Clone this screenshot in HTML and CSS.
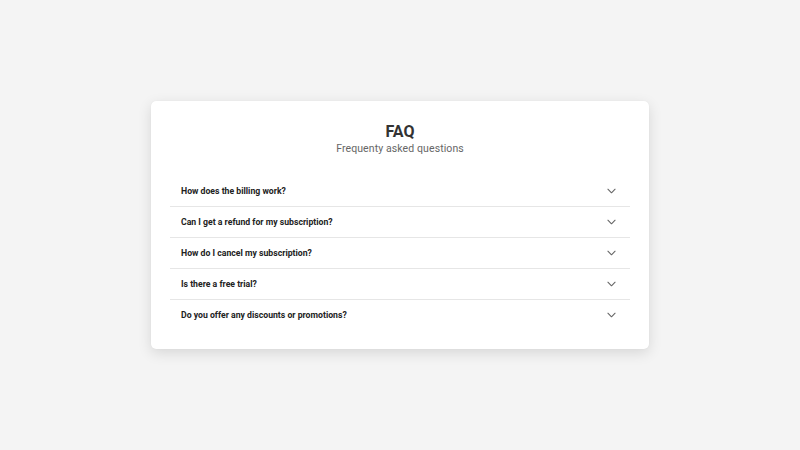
FILE: index.html
```
<!DOCTYPE html>
<html>
<head>
<meta charset="utf-8">
<link rel="stylesheet" href="styles.css">
</head>
<body>
<div class="page">
  <div class="card">
    <h1 class="title">FAQ</h1>
    <p class="subtitle">Frequenty asked questions</p>
    <ul class="faq">
      <li class="item"><span class="q">How does the billing work?</span><svg class="chev" viewBox="0 0 10 6" width="9" height="6"><path d="M1 1l4 4 4-4"/></svg></li>
      <li class="item"><span class="q">Can I get a refund for my subscription?</span><svg class="chev" viewBox="0 0 10 6" width="9" height="6"><path d="M1 1l4 4 4-4"/></svg></li>
      <li class="item"><span class="q">How do I cancel my subscription?</span><svg class="chev" viewBox="0 0 10 6" width="9" height="6"><path d="M1 1l4 4 4-4"/></svg></li>
      <li class="item"><span class="q">Is there a free trial?</span><svg class="chev" viewBox="0 0 10 6" width="9" height="6"><path d="M1 1l4 4 4-4"/></svg></li>
      <li class="item last"><span class="q">Do you offer any discounts or promotions?</span><svg class="chev" viewBox="0 0 10 6" width="9" height="6"><path d="M1 1l4 4 4-4"/></svg></li>
    </ul>
  </div>
</div>
</body>
</html>
```
FILE: styles.css
```
html, body {
  margin: 0;
  padding: 0;
  background: #f4f4f4;
  font-family: Roboto, "Liberation Sans", sans-serif;
}
.page {
  width: 800px;
  height: 450px;
  display: flex;
  justify-content: center;
  padding-top: 101px;
  box-sizing: border-box;
}
.card {
  width: 498px;
  height: 248px;
  box-sizing: border-box;
  background: #fff;
  border-radius: 5px;
  box-shadow: 0 4px 14px rgba(0,0,0,0.12), 0 0 1px rgba(0,0,0,0.08);
  padding: 21px 19px 20px;
  display: flex;
  flex-direction: column;
  align-items: stretch;
}
.title {
  margin: 0;
  text-align: center;
  font-size: 16px;
  line-height: 19px;
  font-weight: 700;
  color: #333;
}
.subtitle {
  margin: 0;
  text-align: center;
  font-size: 10.5px;
  line-height: 16px;
  color: #666;
  letter-spacing: 0.1px;
}
.faq {
  list-style: none;
  margin: 19px 0 0;
  padding: 0;
}
.item {
  height: 30px;
  display: flex;
  align-items: center;
  justify-content: space-between;
  padding: 0 14px 0 11px;
  border-bottom: 1px solid #e6e6e6;
}
.item.last {
  border-bottom: none;
}
.q {
  font-size: 8.7px;
  font-weight: 700;
  color: #222;
}
.chev {
  fill: none;
  stroke: #666;
  stroke-width: 1.2;
  stroke-linecap: round;
  stroke-linejoin: round;
}
```
